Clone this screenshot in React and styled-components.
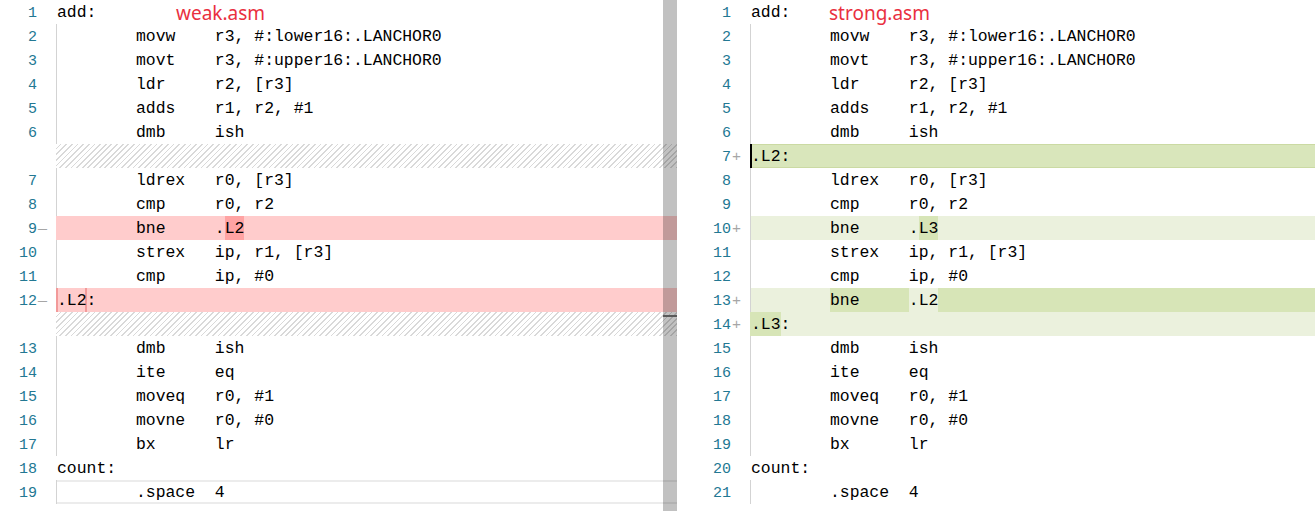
import React from "react";
import styled, { createGlobalStyle } from "styled-components";

const Global = createGlobalStyle`
  html, body { margin: 0; padding: 0; background: #fff; }
  body { font-family: "Liberation Mono", monospace; }
`;

const MONO = `"Liberation Mono", "DejaVu Sans Mono", monospace`;

const expand = (s) => {
  let out = "";
  for (const ch of s) {
    if (ch === "\t") {
      const n = 8 - (out.length % 8);
      out += " ".repeat(n);
    } else out += ch;
  }
  return out;
};

const Page = styled.div`
  display: flex;
  height: 511px;
  overflow: hidden;
  background: #fff;
`;

const Editor = styled.div`
  position: relative;
  flex: none;
  width: ${(p) => p.$w}px;
  margin-left: ${(p) => p.$ml || 0}px;
  height: 511px;
  overflow: hidden;
`;

const Row = styled.div`
  display: flex;
  height: 24px;
`;

const LineNo = styled.div`
  flex: none;
  width: 37px;
  box-sizing: border-box;
  padding-top: 3px;
  text-align: right;
  font-family: ${MONO};
  font-size: 15px;
  line-height: 21px;
  color: #237893;
`;

const Marker = styled.div`
  flex: none;
  width: 19px;
  box-sizing: border-box;
  padding-left: 1px;
  padding-top: 3px;
  font-family: ${MONO};
  font-size: 15px;
  line-height: 21px;
  color: #a6a6a6;
`;

const lineBg = {
  del: "#ffcccc",
  ins: "#ebf1dd",
  insFull: "#d9e6bb",
  hatch:
    "repeating-linear-gradient(-45deg, #d9d9d9 0 1.2px, #fff 1.2px 4px)",
};

const Code = styled.div`
  flex: 1;
  display: flex;
  align-items: stretch;
  min-width: 0;
  font-family: ${MONO};
  font-size: 16.46px;
  color: #000;
  background: ${(p) => lineBg[p.$kind] || "transparent"};
  box-shadow: ${(p) => {
    const s = [];
    if (p.$cursor) s.push("inset 2px 0 0 #000");
    else if (p.$guide) s.push("inset 1px 0 0 #d3d3d3");
    if (p.$kind === "insFull")
      s.push("inset 0 1px 0 #cbdaa3", "inset 0 -1px 0 #cbdaa3");
    if (p.$current) s.push("inset 0 2px 0 #ececec", "inset 0 -2px 0 #ececec");
    return s.length ? s.join(", ") : "none";
  }};
`;

const segBg = {
  del: "#ffa3a3",
  ins: "#d7e5b7",
};

const Seg = styled.span`
  display: block;
  flex: ${(p) => (p.$fill ? 1 : "none")};
  white-space: pre;
  padding-top: 2px;
  line-height: 22px;
  padding-left: ${(p) => (p.$first ? 1 : 0)}px;
  background: ${(p) => segBg[p.$k] || "transparent"};
  box-shadow: ${(p) =>
    p.$k === "edge"
      ? "inset 2px 0 0 #f29a9a, inset -2px 0 0 #f29a9a"
      : "none"};
`;

const Scroll = styled.div`
  position: absolute;
  top: 0;
  right: 0;
  width: 14px;
  height: 100%;
  background: rgba(0, 0, 0, 0.245);
`;

const ScrollMark = styled.div`
  position: absolute;
  left: 0;
  right: 0;
  top: ${(p) => p.$top}px;
  height: 2px;
  background: #5a5a5a;
`;

const Title = styled.div`
  position: absolute;
  top: 1px;
  left: ${(p) => p.$left}px;
  font-family: "Noto Sans", "Open Sans", sans-serif;
  font-size: 19px;
  line-height: 24px;
  color: #e9303f;
  pointer-events: none;
`;

const t = (s) => [[expand(s), null]];

const leftLines = [
  { n: 1, segs: t("add:") },
  { n: 2, segs: t("\tmovw\tr3, #:lower16:.LANCHOR0") },
  { n: 3, segs: t("\tmovt\tr3, #:upper16:.LANCHOR0") },
  { n: 4, segs: t("\tldr\tr2, [r3]") },
  { n: 5, segs: t("\tadds\tr1, r2, #1") },
  { n: 6, segs: t("\tdmb\tish") },
  { hatch: true },
  { n: 7, segs: t("\tldrex\tr0, [r3]") },
  { n: 8, segs: t("\tcmp\tr0, r2") },
  {
    n: 9,
    mark: "—",
    kind: "del",
    noGuide: true,
    segs: [[expand("\tbne\t."), null], ["L2", "del"]],
  },
  { n: 10, segs: t("\tstrex\tip, r1, [r3]") },
  { n: 11, segs: t("\tcmp\tip, #0") },
  { n: 12, mark: "—", kind: "del", segs: [[".L2", "edge"], [":", null]] },
  { hatch: true },
  { n: 13, segs: t("\tdmb\tish") },
  { n: 14, segs: t("\tite\teq") },
  { n: 15, segs: t("\tmoveq\tr0, #1") },
  { n: 16, segs: t("\tmovne\tr0, #0") },
  { n: 17, segs: t("\tbx\tlr") },
  { n: 18, segs: t("count:") },
  { n: 19, current: true, segs: t("\t.space\t4") },
];

const rightLines = [
  { n: 1, segs: t("add:") },
  { n: 2, segs: t("\tmovw\tr3, #:lower16:.LANCHOR0") },
  { n: 3, segs: t("\tmovt\tr3, #:upper16:.LANCHOR0") },
  { n: 4, segs: t("\tldr\tr2, [r3]") },
  { n: 5, segs: t("\tadds\tr1, r2, #1") },
  { n: 6, segs: t("\tdmb\tish") },
  { n: 7, mark: "+", kind: "insFull", cursor: true, segs: t(".L2:") },
  { n: 8, segs: t("\tldrex\tr0, [r3]") },
  { n: 9, segs: t("\tcmp\tr0, r2") },
  {
    n: 10,
    mark: "+",
    kind: "ins",
    segs: [[expand("\tbne\t."), null], ["L3", "ins"]],
  },
  { n: 11, segs: t("\tstrex\tip, r1, [r3]") },
  { n: 12, segs: t("\tcmp\tip, #0") },
  {
    n: 13,
    mark: "+",
    kind: "ins",
    segs: [
      ["        ", null],
      ["bne     ", "ins"],
      [".L2", null],
      ["", "ins", true],
    ],
  },
  { n: 14, mark: "+", kind: "ins", segs: [[".L3", "ins"], [":", null]] },
  { n: 15, segs: t("\tdmb\tish") },
  { n: 16, segs: t("\tite\teq") },
  { n: 17, segs: t("\tmoveq\tr0, #1") },
  { n: 18, segs: t("\tmovne\tr0, #0") },
  { n: 19, segs: t("\tbx\tlr") },
  { n: 20, segs: t("count:") },
  { n: 21, segs: t("\t.space\t4") },
];

function Line({ line }) {
  if (line.hatch) {
    return (
      <Row>
        <LineNo />
        <Marker />
        <Code $kind="hatch" />
      </Row>
    );
  }
  const guide = !line.noGuide && line.segs[0][0].startsWith(" ");
  return (
    <Row>
      <LineNo>{line.n}</LineNo>
      <Marker>{line.mark || ""}</Marker>
      <Code
        $kind={line.kind}
        $guide={guide}
        $cursor={line.cursor}
        $current={line.current}
      >
        {line.segs.map(([text, k, fill], i) => (
          <Seg key={i} $k={k} $fill={fill} $first={i === 0}>
            {text}
          </Seg>
        ))}
      </Code>
    </Row>
  );
}

export default function App() {
  return (
    <>
      <Global />
      <Page>
        <Editor $w={677}>
          {leftLines.map((l, i) => (
            <Line key={i} line={l} />
          ))}
          <Scroll>
            <ScrollMark $top={315} />
          </Scroll>
          <Title $left={176}>weak.asm</Title>
        </Editor>
        <Editor $w={621} $ml={17}>
          {rightLines.map((l, i) => (
            <Line key={i} line={l} />
          ))}
          <Title $left={135}>strong.asm</Title>
        </Editor>
      </Page>
    </>
  );
}
